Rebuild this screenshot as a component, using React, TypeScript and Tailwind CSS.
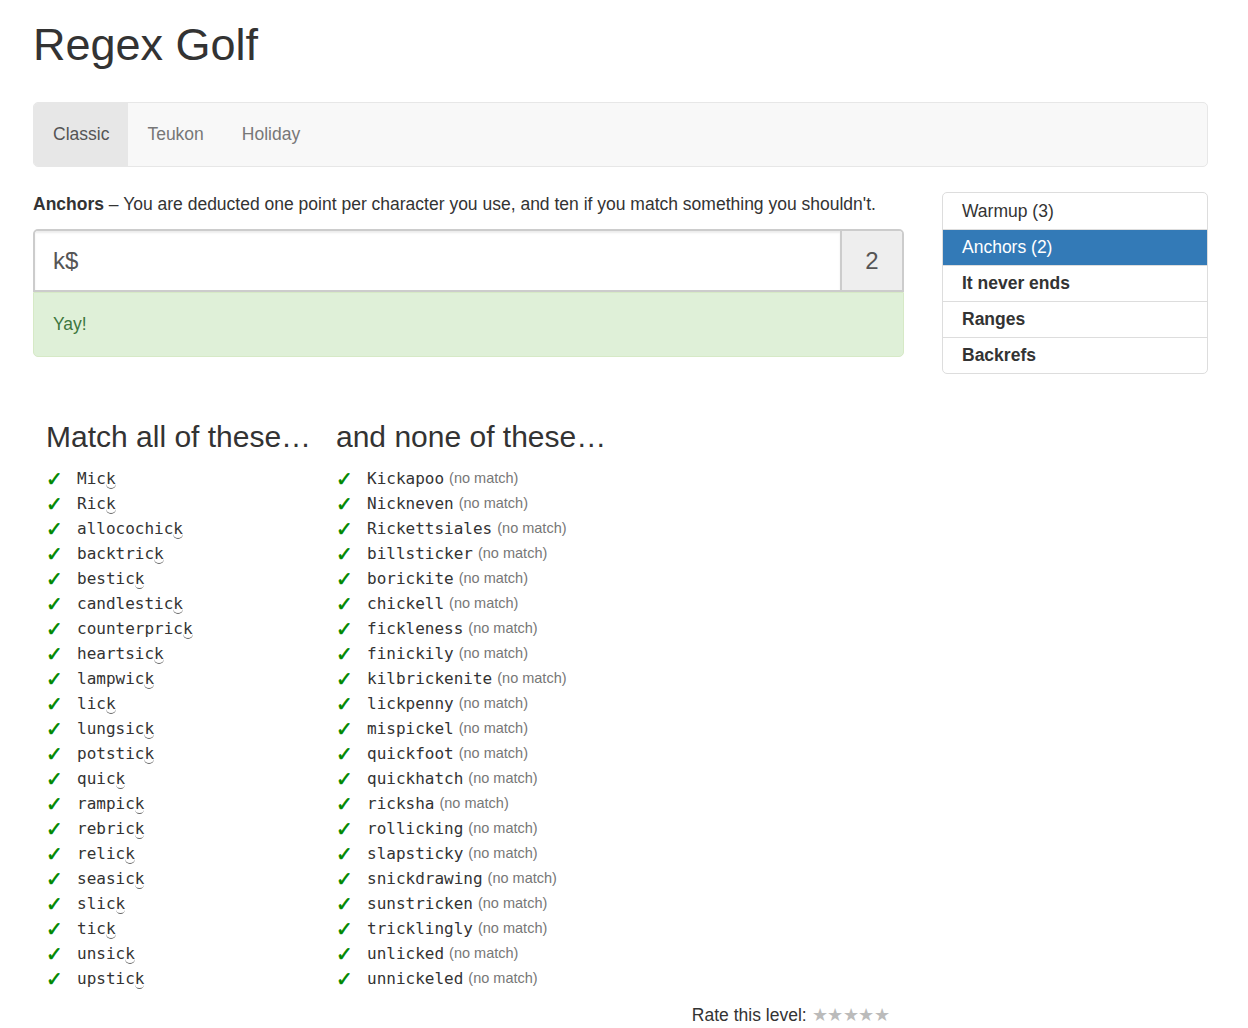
import React from 'react';

const matchAll = [
  'Mick', 'Rick', 'allocochick', 'backtrick', 'bestick', 'candlestick', 'counterprick',
  'heartsick', 'lampwick', 'lick', 'lungsick', 'potstick', 'quick', 'rampick', 'rebrick',
  'relick', 'seasick', 'slick', 'tick', 'unsick', 'upstick',
];

const matchNone = [
  'Kickapoo', 'Nickneven', 'Rickettsiales', 'billsticker', 'borickite', 'chickell',
  'fickleness', 'finickily', 'kilbrickenite', 'lickpenny', 'mispickel', 'quickfoot',
  'quickhatch', 'ricksha', 'rollicking', 'slapsticky', 'snickdrawing', 'sunstricken',
  'tricklingly', 'unlicked', 'unnickeled',
];

const levels = [
  { name: 'Warmup (3)', done: true },
  { name: 'Anchors (2)', done: true, active: true },
  { name: 'It never ends' },
  { name: 'Ranges' },
  { name: 'Backrefs' },
];

function Check() {
  return (
    <span className="w-[31px] shrink-0 text-[#008800] text-[20px] leading-none [-webkit-text-stroke:0.6px_#008800]">
      ✓
    </span>
  );
}

function Word({ word, matched }: { word: string; matched: boolean }) {
  const mono = "font-['DejaVu_Sans_Mono',monospace] text-[16px] text-[#333]";
  if (!matched) return <span className={mono}>{word}</span>;
  return (
    <span className={mono}>
      {word.slice(0, -1)}
      <span className="border-b border-[#666] rounded-b-[6px]">{word.slice(-1)}</span>
    </span>
  );
}

export default function App() {
  return (
    <div className="font-['Liberation_Sans',Arial,sans-serif] text-[#333] px-[33px] pt-[20px] w-[1241px]">
      <h1 className="text-[45px] leading-[50px] mb-[32px]">Regex Golf</h1>

      <div className="flex h-[65px] bg-[#f8f8f8] border border-[#e7e7e7] rounded-[5px] text-[17.5px] text-[#777] overflow-hidden">
        <div className="flex items-center px-[19px] bg-[#e7e7e7] text-[#555]">Classic</div>
        <div className="flex items-center px-[19px]">Teukon</div>
        <div className="flex items-center px-[19px]">Holiday</div>
      </div>

      <div className="flex gap-[38px] mt-[25px]">
        <div className="w-[871px]">
          <p className="text-[17.5px] leading-[24px] mb-[13px]">
            <b>Anchors</b> – You are deducted one point per character you use, and ten if you match something you shouldn't.
          </p>
          <div className="flex h-[63px] border-2 border-[#ccc] rounded-t-[5px] overflow-hidden">
            <div className="flex-1 flex items-center px-[18px] text-[24px] text-[#555] bg-white shadow-[inset_0_2px_2px_rgba(0,0,0,0.075)]">k$</div>
            <div className="w-[62px] flex items-center justify-center border-l-2 border-[#ccc] bg-[#eee] text-[24px] text-[#555]">2</div>
          </div>
          <div className="h-[65px] flex items-center px-[19px] bg-[#dff0d8] border border-[#d6e9c6] rounded-b-[5px] text-[17.5px] text-[#3c763d]">
            Yay!
          </div>

          <div className="flex mt-[62px] pl-[13px]">
            <div className="w-[290px]">
              <h3 className="text-[30px] leading-[36px] mb-[11px]">Match all of these…</h3>
              {matchAll.map((w) => (
                <div key={w} className="flex items-center h-[25px]">
                  <Check />
                  <Word word={w} matched />
                </div>
              ))}
            </div>
            <div>
              <h3 className="text-[30px] leading-[36px] mb-[11px]">and none of these…</h3>
              {matchNone.map((w) => (
                <div key={w} className="flex items-center h-[25px]">
                  <Check />
                  <Word word={w} matched={false} />
                  <span className="ml-[5px] text-[14.5px] text-[#777]">(no match)</span>
                </div>
              ))}
            </div>
          </div>

          <div className="text-right pr-[15px] mt-[11px] text-[17.5px]">
            Rate this level: <span className="text-[#bbb] text-[18px] tracking-[-0.5px]">★★★★★</span>
          </div>
        </div>

        <div className="w-[266px]">
          <div className="border border-[#ddd] rounded-[5px] overflow-hidden text-[17.5px]">
            {levels.map((l, i) => (
              <div
                key={l.name}
                className={
                  'h-[36px] flex items-center px-[19px] ' +
                  (i > 0 ? 'border-t border-[#ddd] ' : '') +
                  (l.active ? 'bg-[#337ab7] text-white border-[#337ab7] ' : '') +
                  (l.done ? '' : 'font-bold')
                }
              >
                {l.name}
              </div>
            ))}
          </div>
        </div>
      </div>
    </div>
  );
}
